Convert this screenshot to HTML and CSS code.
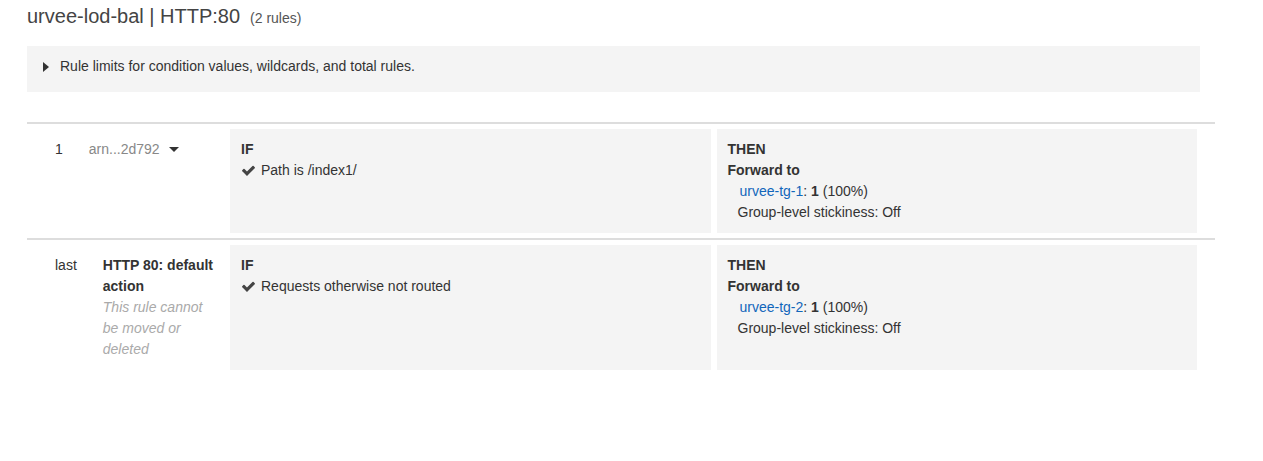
FILE: index.html
```html
<!DOCTYPE html>
<html lang="en">
<head>
<meta charset="utf-8">
<title>Listener rules</title>
<link rel="stylesheet" href="styles.css">
</head>
<body>
<div class="page">
  <h1 class="title">urvee-lod-bal | HTTP:80<span class="count">(2 rules)</span></h1>

  <div class="limits">
    <span class="tri"></span>
    <span>Rule limits for condition values, wildcards, and total rules.</span>
  </div>

  <div class="rules">
    <div class="rule">
      <div class="meta">
        <span class="num">1</span>
        <span class="name">
          <span class="arn">arn...2d792</span>
          <span class="caret"></span>
        </span>
      </div>
      <div class="panel">
        <div class="head">IF</div>
        <div class="cond">
          <svg class="check" viewBox="0 0 1792 1792" width="15" height="15"><path d="M1671 566q0 40-28 68l-724 724-136 136q-28 28-68 28t-68-28l-136-136-362-362q-28-28-28-68t28-68l136-136q28-28 68-28t68 28l294 295 656-657q28-28 68-28t68 28l136 136q28 28 28 68z"/></svg>
          <span>Path is /index1/</span>
        </div>
      </div>
      <div class="panel">
        <div class="head">THEN</div>
        <div class="head">Forward to</div>
        <div class="target"><a href="#" class="link">urvee-tg-1</a>: <b>1</b> (100%)</div>
        <div class="sticky">Group-level stickiness: Off</div>
      </div>
    </div>

    <div class="rule">
      <div class="meta">
        <span class="num">last</span>
        <span class="name default">
          <b class="dname">HTTP 80: default action</b>
          <i class="note">This rule cannot be moved or deleted</i>
        </span>
      </div>
      <div class="panel">
        <div class="head">IF</div>
        <div class="cond">
          <svg class="check" viewBox="0 0 1792 1792" width="15" height="15"><path d="M1671 566q0 40-28 68l-724 724-136 136q-28 28-68 28t-68-28l-136-136-362-362q-28-28-28-68t28-68l136-136q28-28 68-28t68 28l294 295 656-657q28-28 68-28t68 28l136 136q28 28 28 68z"/></svg>
          <span>Requests otherwise not routed</span>
        </div>
      </div>
      <div class="panel">
        <div class="head">THEN</div>
        <div class="head">Forward to</div>
        <div class="target"><a href="#" class="link">urvee-tg-2</a>: <b>1</b> (100%)</div>
        <div class="sticky">Group-level stickiness: Off</div>
      </div>
    </div>
  </div>
</div>
</body>
</html>
```

FILE: styles.css
```css
html, body {
  margin: 0;
  padding: 0;
  background: #ffffff;
}

body {
  font-family: "Liberation Sans", Arial, Helvetica, sans-serif;
  font-size: 14px;
  line-height: 21px;
  color: #333333;
}

.page {
  width: 1188px;
  padding: 4px 0 0 27px;
}

.title {
  margin: 0;
  font-size: 20px;
  line-height: 24px;
  font-weight: normal;
  color: #444444;
}

.count {
  margin-left: 10px;
  font-size: 14px;
  color: #555555;
}

.limits {
  margin: 16px 15px 0 0;
  padding: 10px 16px 15px 16px;
  background: #f4f4f4;
  display: flex;
  align-items: center;
  color: #333333;
}

.tri {
  width: 0;
  height: 0;
  border-top: 5px solid transparent;
  border-bottom: 5px solid transparent;
  border-left: 6px solid #333333;
  margin-right: 11px;
}

.rules {
  margin-top: 30px;
}

.rule {
  display: grid;
  grid-template-columns: 197px 1fr 1fr;
  column-gap: 6px;
  padding: 5px 18px 5px 0;
  border-top: 2px solid #dddddd;
}

.meta {
  display: flex;
  align-items: flex-start;
  padding: 10px 0 10px 28px;
  gap: 26px;
}

.num {
  color: #333333;
}

.name {
  display: flex;
  align-items: center;
}

.name.default {
  display: block;
  width: 112px;
}

.arn {
  color: #888888;
}

.caret {
  width: 0;
  height: 0;
  margin-left: 9px;
  border-left: 5px solid transparent;
  border-right: 5px solid transparent;
  border-top: 5px solid #333333;
}

.dname {
  display: block;
  color: #333333;
}

.note {
  display: block;
  color: #aaaaaa;
}

.panel {
  background: #f4f4f4;
  padding: 10px 11px;
}

.head {
  font-weight: bold;
  color: #333333;
}

.cond {
  display: flex;
  align-items: center;
  gap: 5px;
}

.check {
  fill: #444444;
  flex: none;
}

.target {
  padding-left: 12px;
}

.link {
  color: #1166bb;
  text-decoration: none;
}

.sticky {
  padding-left: 10px;
}
```
